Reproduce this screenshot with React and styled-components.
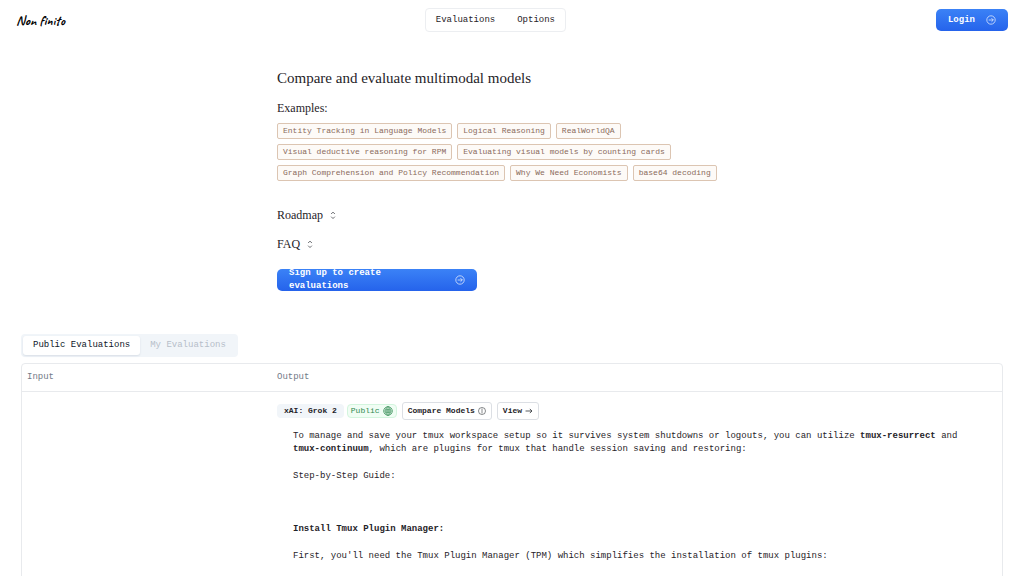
import React from "react";
import styled, { createGlobalStyle } from "styled-components";

const GlobalStyle = createGlobalStyle`
  * {
    box-sizing: border-box;
  }
  body {
    margin: 0;
    background: #ffffff;
    color: #1f2328;
    font-family: "Liberation Mono", monospace;
    font-size: 9px;
    line-height: 13px;
  }
  button {
    font: inherit;
    color: inherit;
    cursor: pointer;
  }
  a {
    color: inherit;
    text-decoration: none;
  }
  h1, h2, p {
    margin: 0;
  }
`;

const Header = styled.header`
  display: flex;
  justify-content: space-between;
  align-items: center;
  padding: 8px 16px;
`;

const Logo = styled.a`
  color: #000000;
  font-family: Caveat, cursive;
  font-size: 14px;
  font-weight: 700;
`;

const Nav = styled.nav`
  display: flex;
  gap: 22px;
  height: 24px;
  margin-right: 10px;
  padding: 0 10px;
  align-items: center;
  border: 1px solid #eceef1;
  border-radius: 4px;
`;

const PrimaryButton = styled.button`
  display: flex;
  align-items: center;
  justify-content: space-between;
  gap: 11px;
  width: ${(props) => props.$width || "auto"};
  height: 22px;
  padding: 0 12px;
  border: 0;
  border-radius: 5px;
  overflow: hidden;
  background: linear-gradient(#3b82f6, #2563eb);
  color: #ffffff;
  font-weight: 700;
  text-align: left;

  svg {
    flex: none;
  }
`;

const Intro = styled.section`
  width: 100%;
  max-width: 470px;
  margin: 0 auto;
  padding-top: 28px;
`;

const Title = styled.h1`
  font-family: "Liberation Serif", serif;
  font-size: 15px;
  font-weight: 400;
  line-height: 20px;
`;

const Subtitle = styled.h2`
  margin-top: 12px;
  font-family: "Liberation Serif", serif;
  font-size: 12px;
  font-weight: 400;
  line-height: 16px;
`;

const Examples = styled.div`
  display: flex;
  flex-wrap: wrap;
  gap: 5px;
  margin: 7px 0 26px;
`;

const Example = styled.a`
  height: 16px;
  padding: 0 5px;
  border: 1px solid #dcc5b2;
  border-radius: 2px;
  background: #fdfaf7;
  color: #8a6a5c;
  font-size: 8px;
  line-height: 14px;
`;

const Disclosure = styled.button`
  display: flex;
  align-items: center;
  gap: 5px;
  margin-bottom: 13px;
  padding: 0;
  border: 0;
  background: none;
  font-family: "Liberation Serif", serif;
  font-size: 12px;
  line-height: 16px;
`;

const SignUp = styled.div`
  padding-top: 4px;
`;

const Evaluations = styled.main`
  padding: 43px 21px 0;
`;

const Tabs = styled.div`
  display: inline-flex;
  padding: 2px;
  border-radius: 4px;
  background: #f1f5f9;
`;

const Tab = styled.button`
  height: 19px;
  padding: 0 10px;
  border: 0;
  border-radius: 3px;
  background: ${(props) => (props.$active ? "#ffffff" : "transparent")};
  box-shadow: ${(props) => (props.$active ? "0 1px 2px #d8dee6" : "none")};
  color: ${(props) => (props.$active ? "#0f172a" : "#b6bec9")};
`;

const TableFrame = styled.div`
  margin-top: 6px;
  border: 1px solid #e8eaed;
  border-radius: 4px;
`;

const Table = styled.table`
  width: 100%;
  border-collapse: collapse;
  table-layout: fixed;
`;

const HeadCell = styled.th`
  width: ${(props) => props.$width || "auto"};
  height: 27px;
  padding: 0 5px;
  border-bottom: 1px solid #e8eaed;
  color: #737b88;
  font-weight: 400;
  text-align: left;
`;

const Cell = styled.td`
  padding: 10px 5px;
  vertical-align: top;
`;

const Meta = styled.div`
  display: flex;
  align-items: center;
  gap: 5px;
  font-size: 8px;
`;

const Labels = styled.div`
  display: flex;
  gap: 3px;
`;

const Badge = styled.span`
  display: flex;
  align-items: center;
  gap: 3px;
  height: 14px;
  padding: 0 7px;
  border-radius: 4px;
  background: #f1f5f9;
  font-weight: 700;
`;

const PublicBadge = styled(Badge)`
  padding: 0 3px;
  border: 1px solid #d3f5de;
  background: #f0fdf4;
  color: #2f8a50;
  font-weight: 400;
`;

const SmallButton = styled.button`
  display: flex;
  align-items: center;
  gap: 3px;
  height: 18px;
  padding: 0 5px;
  border: 1px solid #dcdfe4;
  border-radius: 3px;
  background: #ffffff;
  font-weight: 700;
`;

const Answer = styled.div`
  padding: 10px 16px 0;

  p {
    margin-bottom: 14px;
  }
`;

const Step = styled.div`
  padding-top: 26px;
`;

const Icon = ({ size = 10, children }) => (
  <svg
    width={size}
    height={size}
    viewBox="0 0 15 15"
    fill="none"
    stroke="currentColor"
    aria-hidden="true"
  >
    {children}
  </svg>
);

const ArrowCircle = () => (
  <Icon>
    <circle cx="7.5" cy="7.5" r="6.3" />
    <path d="M4 7.5h7M8.2 4.7 11 7.5l-2.8 2.8" />
  </Icon>
);

const Chevrons = () => (
  <Icon>
    <path d="M4.7 6 7.5 3.2 10.3 6M4.7 10l2.8 2.8 2.8-2.8" />
  </Icon>
);

const Globe = () => (
  <Icon>
    <circle cx="7.5" cy="7.5" r="6.5" />
    <ellipse cx="7.5" cy="7.5" rx="3.1" ry="6.5" />
    <path d="M7.5 1v13M1 7.5h13M2.2 4.4c3 1 7.6 1 10.6 0M2.2 10.6c3-1 7.6-1 10.6 0" />
  </Icon>
);

const CircleBar = () => (
  <Icon size={8}>
    <circle cx="7.5" cy="7.5" r="6.6" />
    <path d="M7.5 3v9" />
  </Icon>
);

const Arrow = () => (
  <Icon size={8}>
    <path d="M1 7.5h12M9 3.5l4 4-4 4" strokeWidth="1.4" />
  </Icon>
);

const examples = [
  "Entity Tracking in Language Models",
  "Logical Reasoning",
  "RealWorldQA",
  "Visual deductive reasoning for RPM",
  "Evaluating visual models by counting cards",
  "Graph Comprehension and Policy Recommendation",
  "Why We Need Economists",
  "base64 decoding",
];

const App = () => {
  return (
    <>
      <GlobalStyle />
      <Header>
        <Logo href="#">Non finito</Logo>
        <Nav>
          <a href="#evaluations">Evaluations</a>
          <a href="#options">Options</a>
        </Nav>
        <PrimaryButton>
          Login
          <ArrowCircle />
        </PrimaryButton>
      </Header>

      <Intro>
        <Title>Compare and evaluate multimodal models</Title>
        <Subtitle>Examples:</Subtitle>
        <Examples>
          {examples.map((text) => (
            <Example href="#" key={text}>
              {text}
            </Example>
          ))}
        </Examples>
        <Disclosure aria-expanded="false">
          Roadmap
          <Chevrons />
        </Disclosure>
        <Disclosure aria-expanded="false">
          FAQ
          <Chevrons />
        </Disclosure>
        <SignUp>
          <PrimaryButton $width="200px">
            Sign up to create evaluations
            <ArrowCircle />
          </PrimaryButton>
        </SignUp>
      </Intro>

      <Evaluations id="evaluations">
        <Tabs role="tablist">
          <Tab role="tab" aria-selected="true" $active>
            Public Evaluations
          </Tab>
          <Tab role="tab" aria-selected="false">
            My Evaluations
          </Tab>
        </Tabs>
        <TableFrame>
          <Table>
            <thead>
              <tr>
                <HeadCell $width="250px">Input</HeadCell>
                <HeadCell>Output</HeadCell>
              </tr>
            </thead>
            <tbody>
              <tr>
                <Cell />
                <Cell>
                  <Meta>
                    <Labels>
                      <Badge>xAI: Grok 2</Badge>
                      <PublicBadge>
                        Public
                        <Globe />
                      </PublicBadge>
                    </Labels>
                    <SmallButton>
                      Compare Models
                      <CircleBar />
                    </SmallButton>
                    <SmallButton>
                      View
                      <Arrow />
                    </SmallButton>
                  </Meta>
                  <Answer>
                    <p>
                      To manage and save your tmux workspace setup so it
                      survives system shutdowns or logouts, you can utilize{" "}
                      <strong>tmux-resurrect</strong> and{" "}
                      <strong>tmux-continuum</strong>, which are plugins for
                      tmux that handle session saving and restoring:
                    </p>
                    <p>Step-by-Step Guide:</p>
                    <Step>
                      <p>
                        <strong>Install Tmux Plugin Manager:</strong>
                      </p>
                      <p>
                        First, you'll need the Tmux Plugin Manager (TPM) which
                        simplifies the installation of tmux plugins:
                      </p>
                    </Step>
                  </Answer>
                </Cell>
              </tr>
            </tbody>
          </Table>
        </TableFrame>
      </Evaluations>
    </>
  );
};

export default App;
